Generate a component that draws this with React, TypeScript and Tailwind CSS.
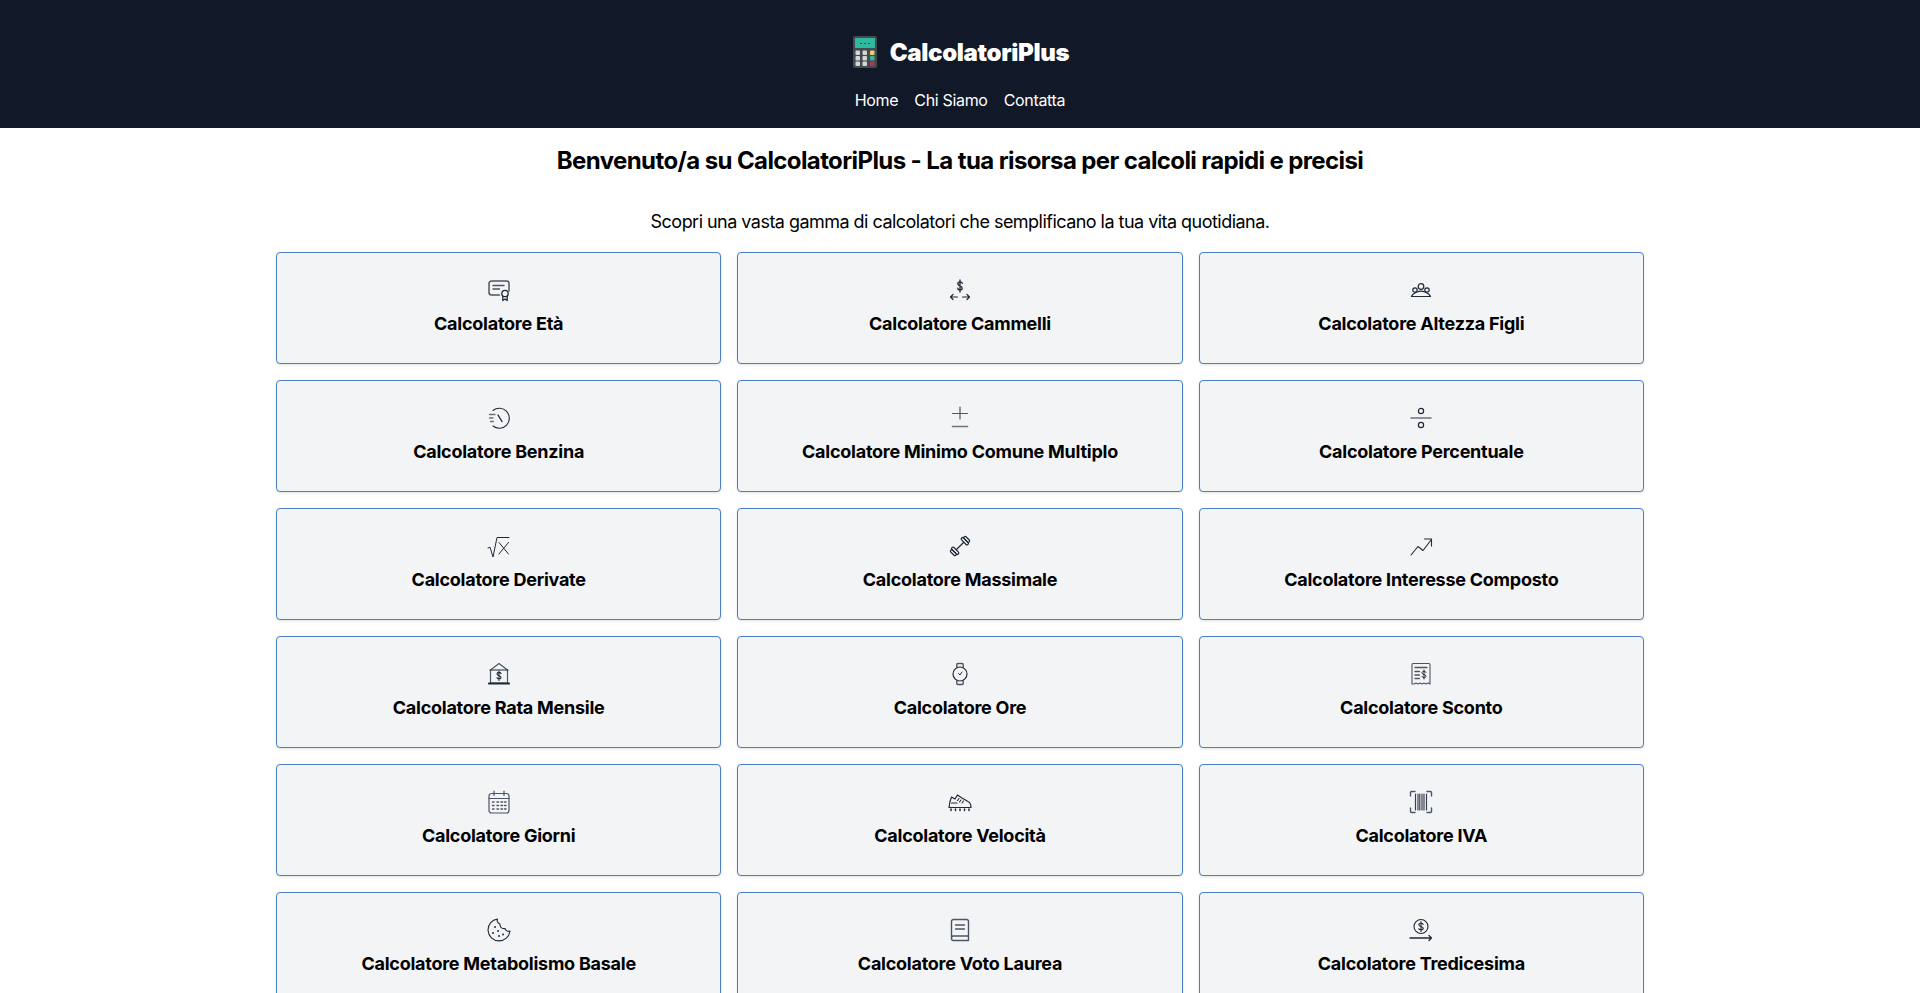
import React from "react";

const S = ({ children }: { children: React.ReactNode }) => (
  <svg width="24" height="24" viewBox="0 0 24 24" fill="none" stroke="#1f2937" strokeWidth="1" strokeLinecap="round" strokeLinejoin="round" className="mb-[8px] mt-[1px] block">
    {children}
  </svg>
);

const icons: Record<string, React.ReactNode> = {
  cert: (<><path d="M12.5 17H4.5A2.5 2.5 0 0 1 2 14.5V5.5A2.5 2.5 0 0 1 4.5 3H19.5A2.5 2.5 0 0 1 22 5.5V13" strokeWidth="1.5" stroke="#4b5563" /><path d="M6 7.5H17M6 11H12.5" strokeWidth="1.4" stroke="#4b5563" /><circle cx="18" cy="15.5" r="3.2" strokeWidth="1.3" /><path d="M15.8 18V22.5L18 21L20.2 22.5V18" strokeWidth="1.3" /></>),
  dollar: (<><path d="M14.2 5.5C14.2 4.4 13.2 3.8 12 3.8S9.8 4.6 9.8 5.7C9.8 8.2 14.2 7.6 14.2 10.2C14.2 11.4 13.2 12 12 12S9.8 11.3 9.8 10.2M12 2V14" strokeWidth="1.3" /><path d="M9.5 19H2.5M5 16.5L2.5 19L5 21.5M14.5 19H21.5M19 16.5L21.5 19L19 21.5" strokeWidth="1.2" /></>),
  people: (<><circle cx="12" cy="8.5" r="2.8" strokeWidth="1.2" /><circle cx="6" cy="12" r="2.2" strokeWidth="1.2" /><circle cx="18" cy="12" r="2.2" strokeWidth="1.2" /><path d="M2.5 18.5C3.5 15.5 6 14.8 8 14C10.5 13 13.5 13 16 14C18 14.8 20.5 15.5 21.5 18.5Z" strokeWidth="1.2" /></>),
  gauge: (<><path d="M6 4.5A10 10 0 1 1 6 20" strokeWidth="1.1" /><path d="M2.5 8.5H8M2.5 12H6M3.5 15.5H6.5" strokeWidth="1.3" stroke="#6b7280" /><path d="M11 9L15 15.5" strokeWidth="1.4" /></>),
  plusminus: (<><path d="M12 1V13M4.5 7.5H19.5" strokeWidth="1.2" stroke="#4b5563" /><path d="M4.5 20.5H19.5" strokeWidth="1.6" stroke="#6b7280" /></>),
  percent: (<><path d="M2 12H22" strokeWidth="1.5" stroke="#6b7280" /><circle cx="12" cy="5" r="2.6" strokeWidth="1.2" /><circle cx="12" cy="19" r="2.6" strokeWidth="1.2" /></>),
  sqrt: (<><path d="M1 14L3 13.2L6 23L10 3.5H22" /><path d="M12 8.5L21.5 20M21.5 8.5L12 20" /></>),
  dumbbell: (<><path d="M8.5 15.5L15.5 8.5" strokeWidth="1.2" /><g transform="rotate(-45 6.5 17.5)"><rect x="3.5" y="14" width="2.6" height="7" rx="1.2" strokeWidth="1.2" /><rect x="6.1" y="13" width="2.8" height="9" rx="1.3" strokeWidth="1.2" /></g><g transform="rotate(-45 17.5 6.5)"><rect x="15.1" y="2" width="2.8" height="9" rx="1.3" strokeWidth="1.2" /><rect x="17.9" y="3" width="2.6" height="7" rx="1.2" strokeWidth="1.2" /></g></>),
  trend: (<><path d="M2 21L9 12.5L14 16.5L22 6" strokeWidth="1.1" /><path d="M15.5 5H22.5V12" strokeWidth="1.1" /></>),
  rate: (<><path d="M3.5 8L12 1.5L20.5 8V21H3.5Z" strokeWidth="1.2" stroke="#4b5563" /><path d="M3 8H21" strokeWidth="1.2" /><path d="M2 21.5H22" strokeWidth="2.2" /><path d="M14 11.7C14 10.9 13 10.4 12 10.4S10 11 10 12C10 14 14 13.5 14 15.5C14 16.5 13 17 12 17S10 16.4 10 15.6M12 9V18.4" strokeWidth="1.1" /></>),
  watch: (<><circle cx="12" cy="12" r="7" strokeWidth="1.2" /><path d="M8.8 5.8V2.5A1 1 0 0 1 9.8 1.5H14.2A1 1 0 0 1 15.2 2.5V5.8M8.8 18.2V21.5A1 1 0 0 0 9.8 22.5H14.2A1 1 0 0 0 15.2 21.5V18.2" strokeWidth="1.4" stroke="#4b5563" /><path d="M10.5 11.5L12 13L14 10" /></>),
  receipt: (<><path d="M3 22V2.5A1 1 0 0 1 4 1.5H20A1 1 0 0 1 21 2.5V22L19 21L17 22L15 21L13 22L11 21L9 22L7 21L5 22Z" strokeWidth="1.1" stroke="#4b5563" /><path d="M6 5.5H18M6 9.5H10.5M6 13H10.5M6 16.5H10.5" strokeWidth="1.3" stroke="#4b5563" /><path d="M17 10.5C17 9.8 16.2 9.3 15 9.3S13 9.8 13 10.8C13 12.8 17 12.2 17 14.2C17 15.2 16.2 15.6 15 15.6S13 15.1 13 14.3M15 8V17" strokeWidth="1" /></>),
  cal: (<><rect x="2" y="3.5" width="20" height="19.5" rx="2.5" strokeWidth="1.2" stroke="#4b5563" /><path d="M2 8.5H22M7 1V5.5M17 1V5.5" strokeWidth="1.2" stroke="#4b5563" /><path d="M5.5 12H7M10 12H11.5M14 12H15.5M17.5 12H19M5.5 15.5H7M10 15.5H11.5M14 15.5H15.5M17.5 15.5H19M5.5 19H7M10 19H11.5M14 19H15.5M17.5 19H19" strokeWidth="1.4" stroke="#4b5563" /></>),
  shoe: (<><path d="M1 17.5L2 11.5L3.5 7L7 9L9.5 5L14 8L20 11.5C22 12.5 23 14 23 17.5Z" strokeWidth="1.2" /><path d="M11 8.5L9.5 10.5M13 10L11.5 12M15.5 11L14 13M3.5 13H9" strokeWidth="1.1" /><path d="M3 20.5V19M7.5 20.5V19M12 20.5V19M16.5 20.5V19M21 20.5V19" strokeWidth="1.5" /></>),
  barcode: (<><path d="M6 1.5H2.5A1 1 0 0 0 1.5 2.5V6M18 1.5H21.5A1 1 0 0 1 22.5 2.5V6M1.5 18V21.5A1 1 0 0 0 2.5 22.5H6M22.5 18V21.5A1 1 0 0 1 21.5 22.5H18" strokeWidth="1.4" stroke="#4b5563" /><path d="M6.5 4V20M9 4V20M10.8 4V20M13 4V20M15 4V20M17.5 4V20" strokeWidth="1.2" stroke="#374151" /></>),
  cookie: (<><path d="M10.5 1A11 11 0 1 0 23 13C21 14 18.5 12.5 18 10.5C15 11 12.5 9 13 6C11 5.5 9.5 3 10.5 1Z" strokeWidth="1.1" /><path d="M8 9H8.1M6 15H6.1M11 13H11.1M12 18H12.1M16 16.5H16.1" strokeWidth="1.8" /></>),
  book: (<><path d="M3.5 20V3.5A2 2 0 0 1 5.5 1.5H18.5A2 2 0 0 1 20.5 3.5V22.5H5.5A2 2 0 0 1 3.5 20.5A2 2 0 0 1 5.5 18H20.5" strokeWidth="1.4" stroke="#4b5563" /><path d="M7.5 7H16.5M7.5 11H16.5" strokeWidth="1.3" stroke="#4b5563" /></>),
  coin: (<><circle cx="12" cy="8.5" r="7" strokeWidth="1.1" /><path d="M14.2 6.5C14.2 5.7 13.2 5.2 12 5.2S9.8 5.8 9.8 6.8C9.8 8.9 14.2 8.2 14.2 10.3C14.2 11.3 13.2 11.8 12 11.8S9.8 11.3 9.8 10.5M12 3.5V13.5" strokeWidth="1.1" /><path d="M1 20H22.5M20 17.5L22.5 20L20 22.5" strokeWidth="1.3" /></>),
};

const cards: [string, string][] = [
  ["Calcolatore Età", "cert"],
  ["Calcolatore Cammelli", "dollar"],
  ["Calcolatore Altezza Figli", "people"],
  ["Calcolatore Benzina", "gauge"],
  ["Calcolatore Minimo Comune Multiplo", "plusminus"],
  ["Calcolatore Percentuale", "percent"],
  ["Calcolatore Derivate", "sqrt"],
  ["Calcolatore Massimale", "dumbbell"],
  ["Calcolatore Interesse Composto", "trend"],
  ["Calcolatore Rata Mensile", "rate"],
  ["Calcolatore Ore", "watch"],
  ["Calcolatore Sconto", "receipt"],
  ["Calcolatore Giorni", "cal"],
  ["Calcolatore Velocità", "shoe"],
  ["Calcolatore IVA", "barcode"],
  ["Calcolatore Metabolismo Basale", "cookie"],
  ["Calcolatore Voto Laurea", "book"],
  ["Calcolatore Tredicesima", "coin"],
];

function Logo() {
  return (
    <svg width="24" height="32" viewBox="0 0 24 32" className="block">
      <rect x="0" y="0" width="24" height="32" rx="2" fill="#434b50" />
      <rect x="2" y="2" width="20" height="10" rx="1" fill="#2fb8a0" />
      <path d="M7 7.5H9M11 7.5H13M15 7.5H17" stroke="#14574f" strokeWidth="1" />
      {[14.5, 20, 25.5].map((y, r) =>
        [2.5, 9.5, 17].map((x, c) => (
          <rect key={`${r}${c}`} x={x} y={y} width="4.5" height="4.5" rx="1"
            fill={c < 2 ? "#d4d6d4" : r === 0 ? "#e8cf6a" : r === 1 ? "#2fb8a0" : "#a83a58"} />
        ))
      )}
    </svg>
  );
}

export default function App() {
  return (
    <div className="min-h-screen bg-white text-black font-['Inter',sans-serif]">
      <header className="bg-[#111827] h-[128px] flex flex-col items-center pt-[36px] text-white">
        <div className="flex items-center gap-[13px] h-[32px] ml-[2px]">
          <Logo />
          <span className="text-2xl font-black tracking-[-0.35px] leading-8 pt-[2px]">CalcolatoriPlus</span>
        </div>
        <nav className="flex gap-[16px] mt-[20px] text-base leading-6 tracking-[-0.32px]">
          <a>Home</a>
          <a>Chi Siamo</a>
          <a>Contatta</a>
        </nav>
      </header>
      <main className="flex flex-col items-center">
        <h1 className="text-2xl font-bold mt-[17px] leading-8 tracking-[-0.6px]">Benvenuto/a su CalcolatoriPlus - La tua risorsa per calcoli rapidi e precisi</h1>
        <p className="text-lg leading-7 mt-[31px] tracking-[-0.53px]">Scopri una vasta gamma di calcolatori che semplificano la tua vita quotidiana.</p>
        <div className="w-[1368px] grid grid-cols-3 gap-4 mt-4 pb-4">
          {cards.map(([t, i]) => (
            <div key={t} className="h-[112px] bg-[#f3f4f6] border border-[#4a80c4] rounded flex flex-col items-center pt-6 shadow-sm">
              <S>{icons[i]}</S>
              <span className="text-lg font-bold leading-7 tracking-[-0.25px]">{t}</span>
            </div>
          ))}
        </div>
      </main>
    </div>
  );
}
